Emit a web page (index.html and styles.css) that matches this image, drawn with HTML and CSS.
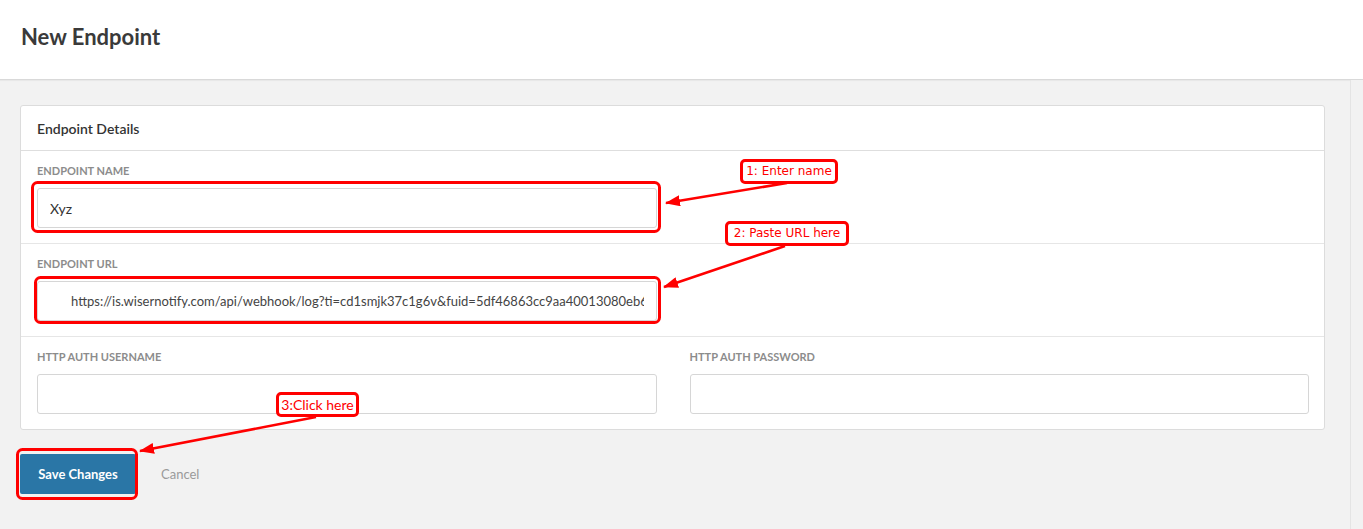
FILE: index.html
```html
<!DOCTYPE html>
<html lang="en">
<head>
<meta charset="utf-8">
<title>New Endpoint</title>
<link rel="stylesheet" href="styles.css">
</head>
<body>
<header class="topbar">
  <h1 class="page-title">New Endpoint</h1>
</header>
<div class="main">
  <div class="content">
    <section class="card">
      <div class="card-head">Endpoint Details</div>
      <div class="card-row">
        <div class="field">
          <label class="field-label">Endpoint Name</label>
          <input class="field-input" type="text" value="Xyz">
        </div>
      </div>
      <div class="card-row">
        <div class="field">
          <label class="field-label">Endpoint URL</label>
          <input class="field-input url-input" type="text" value="https://is.wisernotify.com/api/webhook/log?ti=cd1smjk37c1g6v&amp;fuid=5df46863cc9aa40013080eb6a1">
        </div>
      </div>
      <div class="card-row">
        <div class="field">
          <label class="field-label">HTTP Auth Username</label>
          <input class="field-input" type="text">
        </div>
        <div class="field">
          <label class="field-label">HTTP Auth Password</label>
          <input class="field-input" type="password">
        </div>
      </div>
    </section>
    <div class="actions">
      <button class="btn-primary" type="button">Save Changes</button>
      <a class="btn-link" href="#">Cancel</a>
    </div>
  </div>
  <div class="gutter"></div>
</div>

<svg class="marks" width="1363" height="529" viewBox="0 0 1363 529">
  <defs>
    <marker id="head" markerWidth="15" markerHeight="11" refX="14" refY="5.5" orient="auto" markerUnits="userSpaceOnUse">
      <path d="M0,0 L15,5.5 L0,11 Z" fill="#ff0000"/>
    </marker>
  </defs>
  <rect x="32.5" y="182.5" width="627" height="49" rx="5" fill="none" stroke="#ff0000" stroke-width="3"/>
  <rect x="35.5" y="277.5" width="624" height="45" rx="5" fill="none" stroke="#ff0000" stroke-width="3"/>
  <rect x="17.5" y="449.5" width="119" height="49" rx="5" fill="none" stroke="#ff0000" stroke-width="3"/>
  <line x1="787" y1="183" x2="666" y2="203" stroke="#ff0000" stroke-width="2.6" marker-end="url(#head)"/>
  <line x1="785" y1="246" x2="664" y2="287" stroke="#ff0000" stroke-width="2.6" marker-end="url(#head)"/>
  <line x1="316" y1="417" x2="140" y2="451" stroke="#ff0000" stroke-width="2.6" marker-end="url(#head)"/>
</svg>
<div class="note note-1">1: Enter name</div>
<div class="note note-2">2: Paste URL here</div>
<div class="note note-3">3:Click here</div>
</body>
</html>
```
FILE: styles.css
```css
* { box-sizing: border-box; }

html, body {
  margin: 0;
  height: 100%;
}

body {
  position: relative;
  background: #f2f2f2;
  font-family: Lato, "Open Sans", sans-serif;
  color: #333;
  overflow: hidden;
}

.topbar {
  height: 80px;
  background: #fff;
  border-bottom: 1px solid #d9d9d9;
  box-shadow: 0 1px 1px rgba(0, 0, 0, 0.04);
  display: flex;
  align-items: center;
  padding-left: 21px;
}

.page-title {
  margin: 0;
  font-size: 22px;
  font-weight: 700;
  color: #3a3a3a;
  position: relative;
  top: -3px;
}

.main {
  display: flex;
  height: calc(100% - 80px);
}

.content {
  flex: 1;
  padding: 25px 25px 0 20px;
}

.gutter {
  width: 13px;
  border-left: 1px solid #e4e4e4;
  background: #f2f2f2;
}

.card {
  background: #fff;
  border: 1px solid #dcdcdc;
  border-radius: 3px;
}

.card-head {
  height: 45px;
  display: flex;
  align-items: center;
  padding: 0 16px;
  border-bottom: 1px solid #dedede;
  font-size: 14px;
  font-weight: 600;
  color: #333;
}

.card-row {
  display: grid;
  grid-template-columns: 1fr 1fr;
  column-gap: 33px;
  padding: 13px 15px 15px 16px;
  border-bottom: 1px solid #e6e6e6;
}

.card-row:last-child {
  border-bottom: 0;
}

.field {
  display: flex;
  flex-direction: column;
}

.field-label {
  font-size: 11px;
  line-height: 14px;
  font-weight: 700;
  text-transform: uppercase;
  color: #8c8c8c;
  margin-bottom: 10px;
}

.field-input {
  height: 40px;
  width: 100%;
  border: 1px solid #d6d6d6;
  border-radius: 3px;
  padding: 0 12px;
  font-family: Lato, "Open Sans", sans-serif;
  font-size: 14px;
  color: #333;
  background: #fff;
  outline: none;
}

.url-input {
  padding-left: 33px;
  font-size: 13px;
  color: #444;
}

.actions {
  display: flex;
  align-items: center;
  gap: 25px;
  margin-top: 24px;
}

.btn-primary {
  width: 116px;
  height: 40px;
  border: 0;
  border-radius: 2px;
  background: #2a76a6;
  color: #fff;
  font-family: Lato, "Open Sans", sans-serif;
  font-size: 13px;
  font-weight: 700;
  padding: 0;
}

.btn-link {
  font-size: 13px;
  color: #9a9a9a;
  text-decoration: none;
}

/* red callouts drawn over the form */
.marks {
  position: absolute;
  left: 0;
  top: 0;
  pointer-events: none;
}

.note {
  position: absolute;
  height: 25px;
  border: 3px solid #ff0000;
  border-radius: 5px;
  background: #fff;
  color: #ff0000;
  font-family: "DejaVu Sans", Verdana, sans-serif;
  font-size: 12px;
  line-height: 19px;
  text-align: center;
  white-space: nowrap;
}

.note-1 { left: 740px; top: 159px; width: 98px; }
.note-2 { left: 725px; top: 221px; width: 124px; }
.note-3 {
  left: 276px;
  top: 392px;
  width: 83px;
  font-family: Lato, sans-serif;
  font-size: 14px;
}
```
